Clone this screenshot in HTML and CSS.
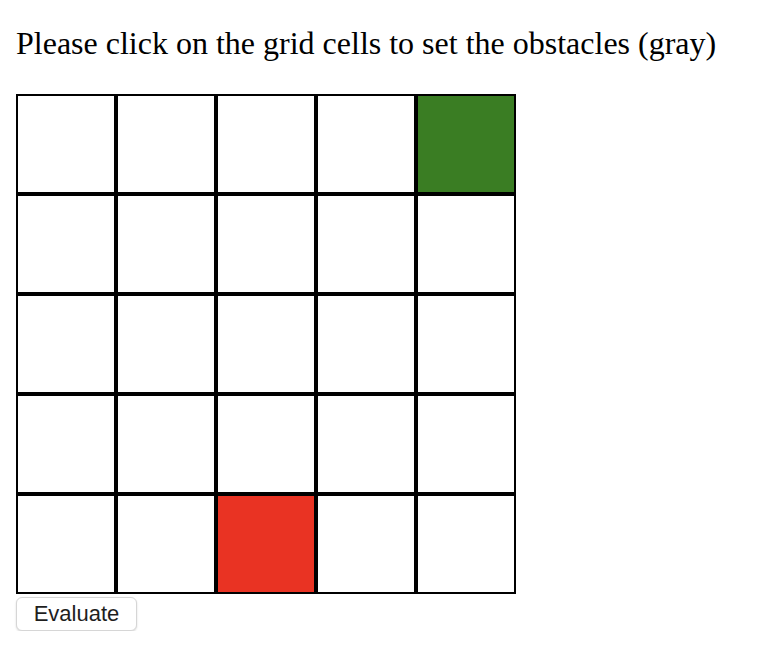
FILE: index.html
```html
<!DOCTYPE html>
<html>
<head>
<meta charset="utf-8">
<link rel="stylesheet" href="styles.css">
</head>
<body>
<div class="page">
  <h1 class="title">Please click on the grid cells to set the obstacles (gray)</h1>
  <div class="grid">
    <div class="cell"></div><div class="cell"></div><div class="cell"></div><div class="cell"></div><div class="cell goal"></div>
    <div class="cell"></div><div class="cell"></div><div class="cell"></div><div class="cell"></div><div class="cell"></div>
    <div class="cell"></div><div class="cell"></div><div class="cell"></div><div class="cell"></div><div class="cell"></div>
    <div class="cell"></div><div class="cell"></div><div class="cell"></div><div class="cell"></div><div class="cell"></div>
    <div class="cell"></div><div class="cell"></div><div class="cell start"></div><div class="cell"></div><div class="cell"></div>
  </div>
  <button class="btn">Evaluate</button>
</div>
</body>
</html>
```

FILE: styles.css
```css
html, body {
  margin: 0;
  padding: 0;
  background: #fff;
}
.page {
  padding: 0 16px;
  font-family: "Liberation Serif", "Times New Roman", serif;
}
.title {
  margin: 25px 0 32px;
  font-size: 32px;
  font-weight: normal;
  line-height: 37px;
  color: #000;
}
.grid {
  display: grid;
  grid-template-columns: repeat(5, 100px);
  grid-template-rows: repeat(5, 100px);
  width: 500px;
}
.cell {
  box-sizing: border-box;
  border: 2px solid #000;
  background: #fff;
}
.cell.goal {
  background: #3a7d23;
}
.cell.start {
  background: #e93323;
}
.btn {
  display: block;
  margin-top: 3px;
  width: 121px;
  height: 34px;
  padding: 0;
  font-family: "Liberation Sans", Arial, sans-serif;
  font-size: 22px;
  color: #1e1e1e;
  background: #fff;
  border: 1px solid #d6d6d6;
  border-radius: 6px;
  box-shadow: 0 1px 2px rgba(0,0,0,0.15);
}
```
